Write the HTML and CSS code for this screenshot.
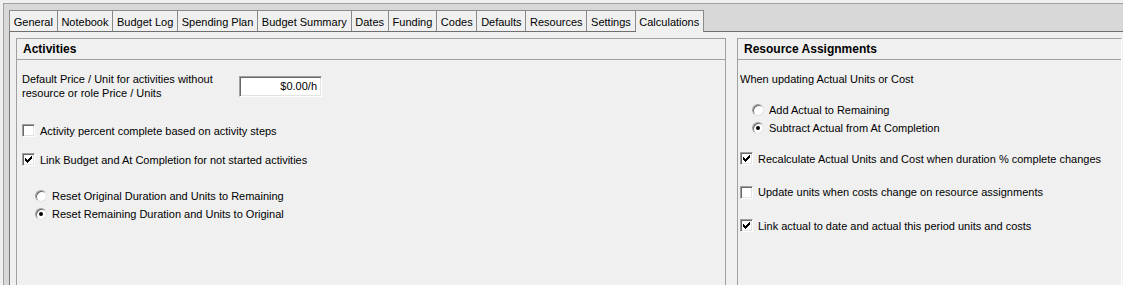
FILE: index.html
```html
<!DOCTYPE html>
<html lang="en">
<head>
    <meta charset="UTF-8">
    <title>Project Details - Calculations</title>
    <link rel="stylesheet" href="styles.css">
</head>
<body>
    <div class="frame">
        <!-- tab strip -->
        <div class="tabs">
            <div class="tab">General</div>
            <div class="tab">Notebook</div>
            <div class="tab">Budget Log</div>
            <div class="tab">Spending Plan</div>
            <div class="tab">Budget Summary</div>
            <div class="tab">Dates</div>
            <div class="tab">Funding</div>
            <div class="tab">Codes</div>
            <div class="tab">Defaults</div>
            <div class="tab">Resources</div>
            <div class="tab">Settings</div>
            <div class="tab active">Calculations</div>
        </div>

        <div class="page">
            <!-- Activities -->
            <div class="panel activities">
                <div class="panel-head">Activities</div>
                <div class="panel-body act-body">
                    <div class="price-row">
                        <div class="price-label">Default Price / Unit for activities without resource or role Price / Units</div>
                        <div class="price-box">$0.00/h</div>
                    </div>

                    <div class="check-group act-checks">
                        <div class="opt"><span class="check"></span>Activity percent complete based on activity steps</div>
                        <div class="opt"><span class="check"><svg viewBox="0 0 11 11"><path d="M2 4h1v3H2zM3 5h1v3H3zM4 6h1v3H4zM5 5h1v3H5zM6 4h1v3H6zM7 3h1v3H7zM8 2h1v3H8z"/></svg></span>Link Budget and At Completion for not started activities</div>
                    </div>

                    <div class="radio-group act-radios">
                        <div class="opt"><span class="radio"></span>Reset Original Duration and Units to Remaining</div>
                        <div class="opt"><span class="radio on"></span>Reset Remaining Duration and Units to Original</div>
                    </div>
                </div>
            </div>

            <!-- Resource Assignments -->
            <div class="panel resources">
                <div class="panel-head">Resource Assignments</div>
                <div class="panel-body res-body">
                    <div class="res-label">When updating Actual Units or Cost</div>

                    <div class="radio-group res-radios">
                        <div class="opt"><span class="radio"></span>Add Actual to Remaining</div>
                        <div class="opt"><span class="radio on"></span>Subtract Actual from At Completion</div>
                    </div>

                    <div class="check-group res-checks">
                        <div class="opt"><span class="check"><svg viewBox="0 0 11 11"><path d="M2 4h1v3H2zM3 5h1v3H3zM4 6h1v3H4zM5 5h1v3H5zM6 4h1v3H6zM7 3h1v3H7zM8 2h1v3H8z"/></svg></span>Recalculate Actual Units and Cost when duration % complete changes</div>
                        <div class="opt"><span class="check"></span>Update units when costs change on resource assignments</div>
                        <div class="opt"><span class="check"><svg viewBox="0 0 11 11"><path d="M2 4h1v3H2zM3 5h1v3H3zM4 6h1v3H4zM5 5h1v3H5zM6 4h1v3H6zM7 3h1v3H7zM8 2h1v3H8z"/></svg></span>Link actual to date and actual this period units and costs</div>
                    </div>
                </div>
            </div>
        </div>
    </div>
</body>
</html>
```

FILE: styles.css
```css
html, body {
    margin: 0;
    height: 285px;
    overflow: hidden;
}
body {
    background: #f0f0f0;
    font-family: "Liberation Sans", Arial, sans-serif;
    font-size: 11px;
    line-height: 14px;
    color: #000;
}
.frame {
    margin: 3px 0 0 3px;
    border-top: 1px solid #a0a0a0;
    border-left: 1px solid #a0a0a0;
    background: #d8d8d8;
    padding: 6px 0 0 5px;
    height: 275px;
    overflow: hidden;
}

/* tabs */
.tabs {
    display: flex;
    height: 21px;
}
.tab {
    background: #f0f0f0;
    border-top: 1px solid #8a8a8a;
    border-right: 1px solid #8a8a8a;
    padding: 4px 3.75px 2px;
    height: 14px;
    white-space: nowrap;
}
.tab:first-child {
    border-left: 1px solid #8a8a8a;
}
.tab.active {
    height: 15px;
    position: relative;
    z-index: 1;
}

/* page */
.page {
    display: flex;
    gap: 11px;
    background: #f0f0f0;
    border-top: 1px solid #6f6f6f;
    border-left: 1px solid #7a7a7a;
    padding: 6px 0 0 6px;
    height: 247px;
    overflow: hidden;
}
.panel {
    border: 1px solid #a0a0a0;
    height: 260px;
    flex: none;
}
.activities {
    width: 708px;
}
.resources {
    width: 383px;
    border-right-color: #fff;
}
.panel-head {
    height: 20px;
    line-height: 20px;
    border-bottom: 1px solid #a0a0a0;
    padding-left: 6px;
    font-size: 12px;
    font-weight: bold;
}
.act-body {
    padding: 12px 0 0 5px;
}
.res-body {
    padding: 12px 0 0 2px;
}

/* price row */
.price-row {
    display: flex;
    align-items: center;
    height: 28px;
}
.price-label {
    width: 217px;
    flex: none;
}
.price-box {
    box-sizing: border-box;
    width: 83px;
    height: 21px;
    line-height: 19px;
    background: #fff;
    border: 1px solid;
    border-color: #a0a0a0 #fff #fff #a0a0a0;
    box-shadow: inset 1px 1px 0 #696969, inset -1px -1px 0 #e3e3e3;
    text-align: right;
    padding: 0 4px 0 0;
}

/* option rows */
.check-group, .radio-group {
    display: flex;
    flex-direction: column;
}
.opt {
    display: flex;
    align-items: center;
    gap: 5px;
    white-space: nowrap;
}
.check-group .opt {
    height: 13px;
}
.radio-group .opt {
    height: 12px;
}
.act-checks {
    margin-top: 24px;
    gap: 16px;
}
.act-radios {
    margin-top: 24px;
    gap: 6px;
    padding-left: 13px;
}
.res-radios {
    margin-top: 18px;
    gap: 6px;
    padding-left: 12px;
}
.res-checks {
    margin-top: 18px;
    gap: 20.5px;
}

.check {
    box-sizing: border-box;
    width: 13px;
    height: 13px;
    flex: none;
    background: #fff;
    border: 1px solid;
    border-color: #a0a0a0 #fff #fff #a0a0a0;
    box-shadow: inset 1px 1px 0 #696969, inset -1px -1px 0 #e3e3e3;
}
.check svg {
    display: block;
    width: 11px;
    height: 11px;
    fill: #000;
    shape-rendering: crispEdges;
}
.radio {
    box-sizing: border-box;
    width: 12px;
    height: 12px;
    flex: none;
    border-radius: 50%;
    background: #fff;
    border: 1px solid;
    border-color: #a0a0a0 #e3e3e3 #e3e3e3 #a0a0a0;
    box-shadow: inset 1px 1px 0 #696969;
    position: relative;
}
.radio.on::after {
    content: "";
    position: absolute;
    left: 3px;
    top: 3px;
    width: 4px;
    height: 4px;
    border-radius: 50%;
    background: #000;
}
```
